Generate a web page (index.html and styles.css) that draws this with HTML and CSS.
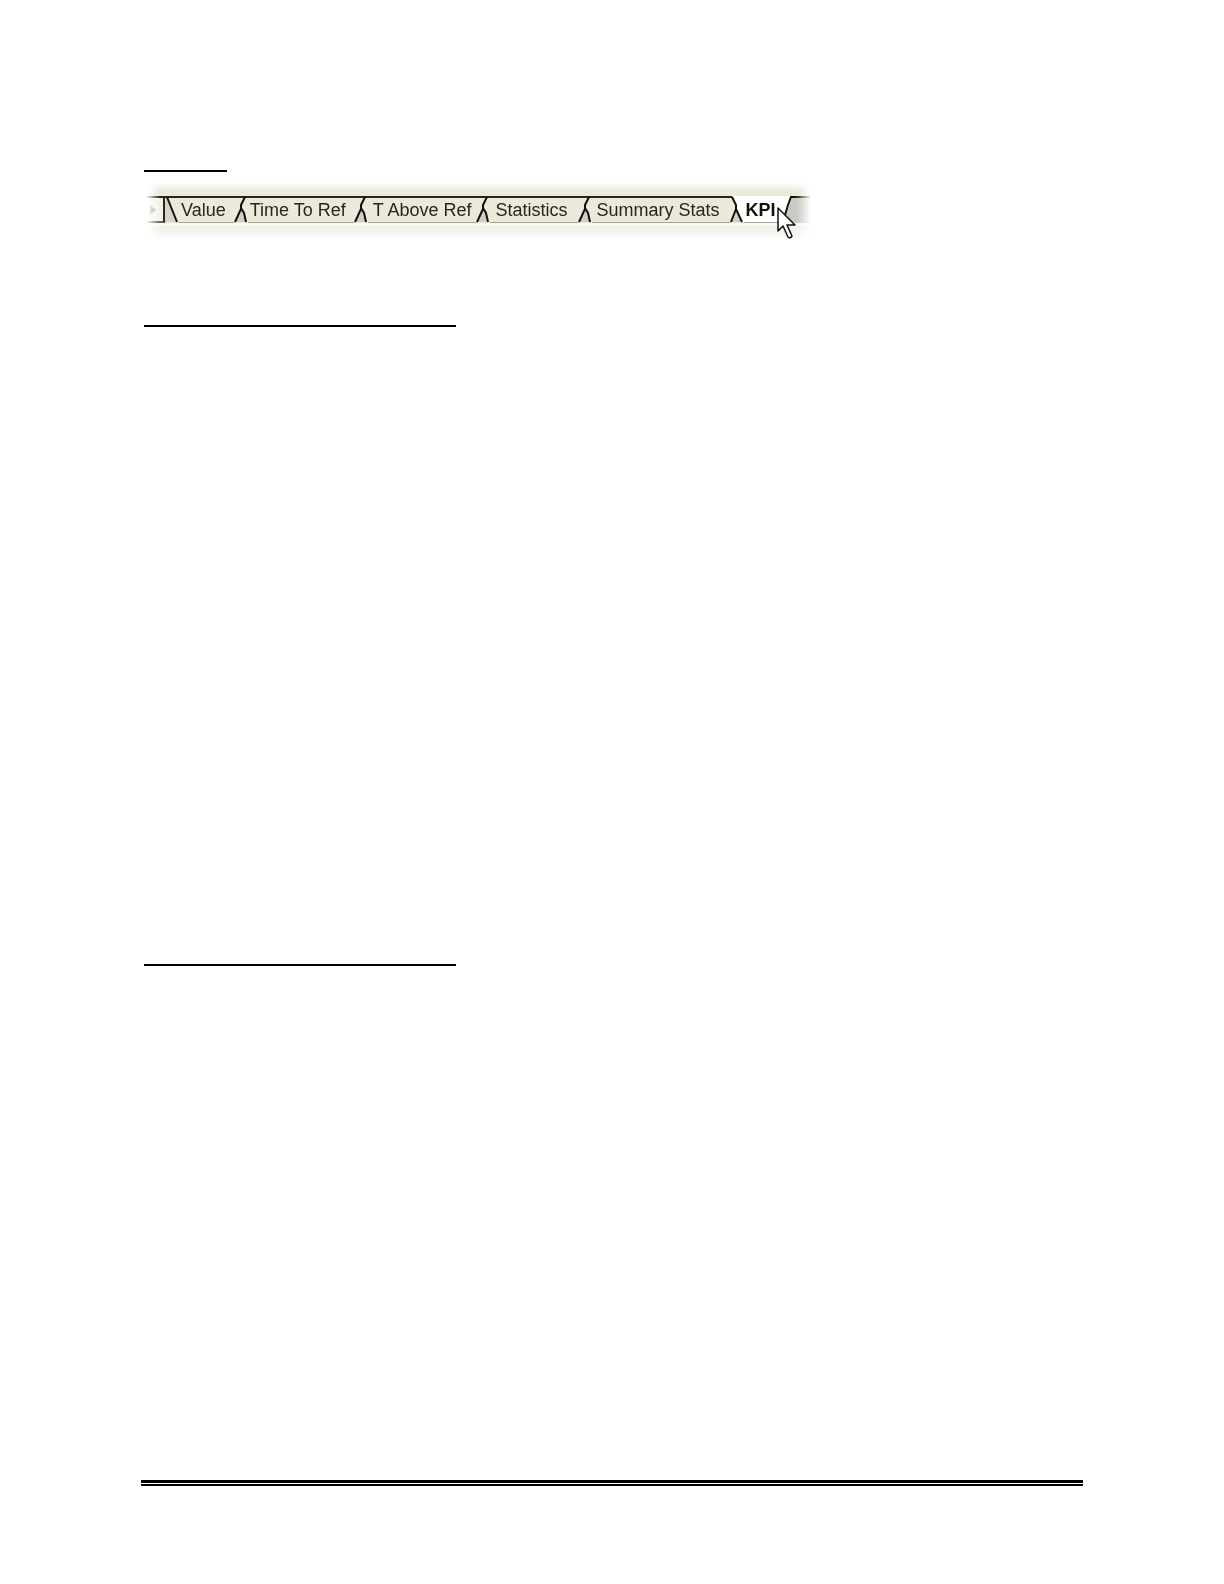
FILE: index.html
```html
<!DOCTYPE html>
<html lang="en">
  <head>
    <meta charset="UTF-8" />
    <meta name="viewport" content="width=device-width, initial-scale=1.0" />
    <title>KPI</title>
    <link rel="stylesheet" href="styles.css">
  </head>
  <body>
    <main class="content">
      <section class="section intro">
        <hr class="underline short" />
        <div class="sheet-tabs">
          <div class="strip">
            <div class="scroll-box">
              <svg width="7" height="10" viewBox="0 0 7 10"><path d="M0 0L6 5L0 10Z" fill="#a5a39b" /></svg>
            </div>
            <svg class="edge" width="14" height="27" viewBox="0 0 14 27">
              <path d="M0 1H3L12 26H0Z" fill="#d6d4c8" />
              <path d="M0 1H14" stroke="#28261c" stroke-width="2" />
              <path d="M2 1L12 26" stroke="#11100b" stroke-width="2" fill="none" />
            </svg>
            <button class="tab">Value</button>
            <svg class="edge" width="14" height="27" viewBox="0 0 14 27">
              <path d="M7 13L2 26H12Z" fill="#cfcec8" />
              <path d="M0 1H14" stroke="#28261c" stroke-width="2" />
              <path d="M11 1L7 9V13L1 26M7 12L10 17L12 26" stroke="#11100b" stroke-width="2" fill="none" />
            </svg>
            <button class="tab">Time To Ref</button>
            <svg class="edge" width="14" height="27" viewBox="0 0 14 27">
              <path d="M7 13L2 26H12Z" fill="#cfcec8" />
              <path d="M0 1H14" stroke="#28261c" stroke-width="2" />
              <path d="M11 1L7 9V13L1 26M7 12L10 17L12 26" stroke="#11100b" stroke-width="2" fill="none" />
            </svg>
            <button class="tab mid">T Above Ref</button>
            <svg class="edge" width="14" height="27" viewBox="0 0 14 27">
              <path d="M7 13L2 26H12Z" fill="#cfcec8" />
              <path d="M0 1H14" stroke="#28261c" stroke-width="2" />
              <path d="M11 1L7 9V13L1 26M7 12L10 17L12 26" stroke="#11100b" stroke-width="2" fill="none" />
            </svg>
            <button class="tab wide">Statistics</button>
            <svg class="edge" width="14" height="27" viewBox="0 0 14 27">
              <path d="M7 13L2 26H12Z" fill="#cfcec8" />
              <path d="M0 1H14" stroke="#28261c" stroke-width="2" />
              <path d="M11 1L7 9V13L1 26M7 12L10 17L12 26" stroke="#11100b" stroke-width="2" fill="none" />
            </svg>
            <button class="tab wide">Summary Stats</button>
            <svg class="edge" width="14" height="27" viewBox="0 0 14 27">
              <path d="M2 0H14V26H12Z" fill="#fff" />
              <path d="M6 14L2 26H12Z" fill="#cfcec8" />
              <path d="M0 1H2" stroke="#28261c" stroke-width="2" />
              <path d="M2 1L6 9V13L12 26M6 13L1 26" stroke="#11100b" stroke-width="2" fill="none" />
            </svg>
            <button class="tab active">KPI</button>
            <svg class="edge" width="14" height="27" viewBox="0 0 14 27">
              <path d="M0 0H11L4 26H0Z" fill="#fff" />
              <path d="M11 1H14V26H3Z" fill="#cac9c3" />
              <path d="M14 1H10L7 9L2 26" stroke="#11100b" stroke-width="2" fill="none" />
            </svg>
            <div class="strip-end"></div>
          </div>
          <svg class="cursor" width="20" height="34" viewBox="0 0 20 34">
            <path d="M1 1V24L6 19L11 30Q13 32 15 29L10 18H18Z" fill="#fff" stroke="#11100b" stroke-width="1.5" stroke-linejoin="round" />
          </svg>
        </div>
      </section>
      <section class="section details">
        <hr class="underline" />
      </section>
      <section class="section">
        <hr class="underline" />
      </section>
    </main>

    <footer>
      <hr class="rule-thick" />
      <hr class="rule-thin" />
    </footer>
  </body>
</html>
```

FILE: styles.css
```css
* {
  box-sizing: border-box;
}
body {
  font-family: "Liberation Sans", Arial, sans-serif;
  background: white;
  margin: 0;
  padding: 170px 141px 98px;
  display: flex;
  flex-direction: column;
  min-height: 100vh;
}
hr {
  margin: 0;
  border: none;
  background: black;
}
.content {
  flex: 1;
  padding-left: 3px;
}
.intro {
  padding-bottom: 83px;
}
.details {
  padding-bottom: 637px;
}
.underline {
  width: 312px;
  height: 2px;
}
.underline.short {
  width: 83px;
}

/* sheet tabs, faded out towards the edges */
.sheet-tabs {
  position: relative;
  width: max-content;
  margin-top: 10px;
  margin-left: 2px;
}
.strip {
  display: flex;
  padding: 14px 0 19px;
  background: linear-gradient(#ebe9da 0 41px, #fbfaf2 41px 44px, #f0efe3 44px);
  mask-image: linear-gradient(to right, transparent, black 14px, black calc(100% - 14px), transparent),
    linear-gradient(transparent, black 10px, black 44px, transparent 58px);
  mask-composite: intersect;
}
.scroll-box {
  display: flex;
  align-items: center;
  width: 19px;
  height: 27px;
  padding-left: 4px;
  background: #f3f2e9;
  border-top: 2px solid #28261c;
  border-right: 2px solid #28261c;
  border-bottom: 2px solid #66645a;
}
.edge {
  display: block;
  flex: none;
}
.tab {
  height: 27px;
  padding: 0 8px 0 2px;
  background: #ebe9da;
  border: none;
  border-top: 2px solid #28261c;
  border-bottom: 1px solid #a5a398;
  color: #28261c;
  font-family: inherit;
  font-size: 18px;
  line-height: 24px;
  cursor: pointer;
}
.tab.mid {
  padding: 0 5px;
}
.tab.wide {
  padding: 0 10px 0 5px;
}
.tab.active {
  padding: 0 5px 0 2px;
  background: white;
  border-top-color: white;
  color: #11100b;
  font-weight: bold;
}
.strip-end {
  width: 16px;
  height: 27px;
  background: #cac9c3;
  border-top: 2px solid #28261c;
}
.cursor {
  position: absolute;
  right: 14px;
  top: 25px;
}

footer {
  display: grid;
  gap: 1px;
}
.rule-thick {
  height: 3px;
}
.rule-thin {
  height: 2px;
}
```
